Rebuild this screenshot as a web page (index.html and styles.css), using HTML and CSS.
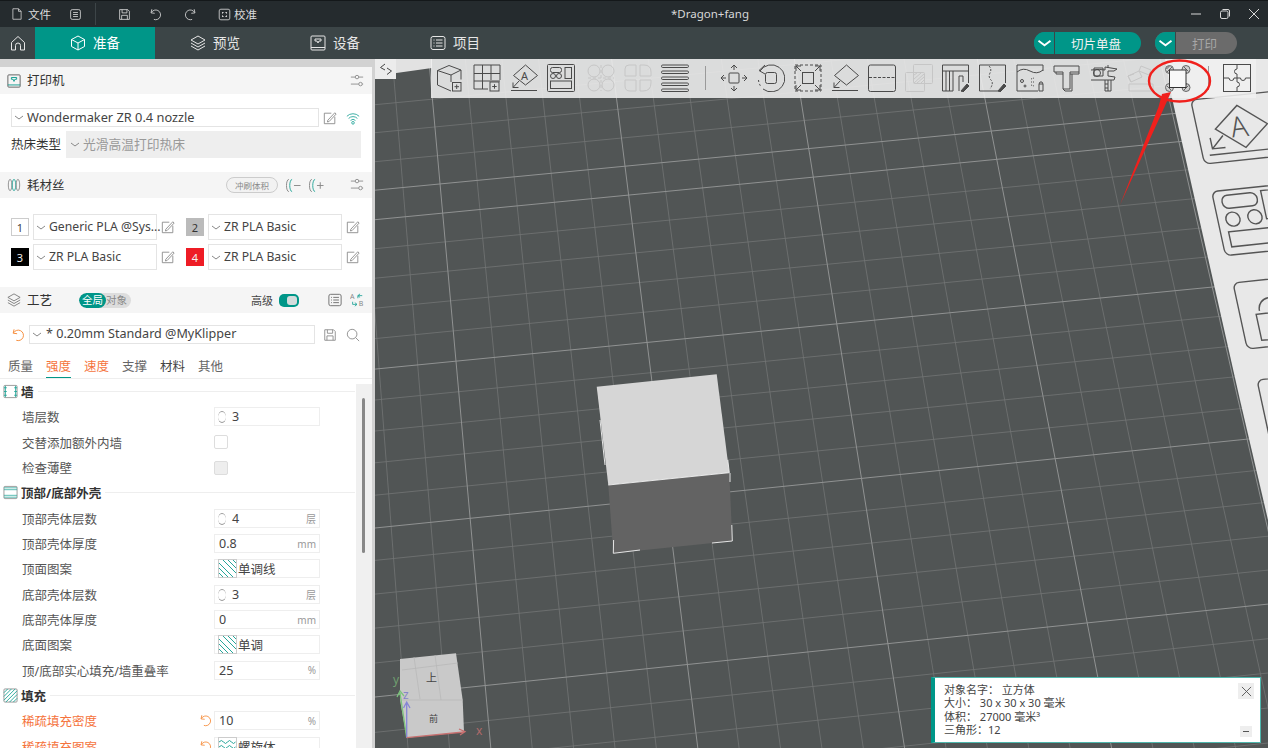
FILE: index.html
```html
<!DOCTYPE html>
<html lang="en">
<head>
    <meta charset="UTF-8">
    <meta name="viewport" content="width=device-width, initial-scale=1.0">
    <title>*Dragon+fang</title>
    <link rel="stylesheet" href="styles.css">
</head>
<body>
    <svg class="sprite" xmlns="http://www.w3.org/2000/svg">
        <symbol id="i-file" viewBox="0 0 16 16"><path d="M2.500 1h7.500l3.500 3.500V15h-11z M10 1v3.500h3.500"/></symbol>
        <symbol id="i-menu" viewBox="0 0 16 16"><rect x="2" y="2" width="12" height="12" rx="2"/><path d="M5 5.500h6M5 8h6M5 10.500h6"/></symbol>
        <symbol id="i-save" viewBox="0 0 16 16"><path d="M2 2h10l2 2v10H2z M5 2v4h6V2 M4.500 14v-5h7v5"/></symbol>
        <symbol id="i-undo" viewBox="0 0 16 16"><path d="M3.500 1.500L2.500 6L7 6.500 M3 5.500A6 6 0 1 1 6 14"/></symbol>
        <symbol id="i-redo" viewBox="0 0 16 16"><path d="M12.500 1.500L13.500 6L9 6.500 M13 5.500A6 6 0 1 0 10 14"/></symbol>
        <symbol id="i-calib" viewBox="0 0 16 16"><rect x="1.500" y="1.500" width="13" height="13" rx="2"/><path d="M5 5.500h2M9 5.500h2M5 10.500h2M9 10.500h2M5.500 5v2M10.500 5v2M5.500 9v2M10.500 9v2"/></symbol>
        <symbol id="i-home" viewBox="0 0 16 16"><path d="M1.500 7.500L8 1.500l6.500 6V15H10.500V10.500a2.500 2.500 0 0 0-5 0V15H1.500z"/></symbol>
        <symbol id="i-cube" viewBox="0 0 16 16"><path d="M8 1l6.500 3.500v7L8 15l-6.500-3.500v-7z M1.500 4.500L8 8l6.500-3.500 M8 8v7"/></symbol>
        <symbol id="i-layers" viewBox="0 0 16 16"><path d="M8 1l7 4-7 4-7-4z M1 8l7 4 7-4 M1 11l7 4 7-4"/></symbol>
        <symbol id="i-device" viewBox="0 0 16 16"><rect x="1" y="1" width="14" height="14" rx="1"/><path d="M1 12.500h14 M5 4h6v2H9L8 8 7 6H5z"/></symbol>
        <symbol id="i-list" viewBox="0 0 16 16"><rect x="1" y="1.500" width="14" height="13" rx="2"/><path d="M3.500 5h1M6 5h6.500M3.500 8h1M6 8h6.500M3.500 11h1M6 11h6.500"/></symbol>
        <symbol id="i-printer" viewBox="0 0 16 16"><rect x="1" y="1" width="14" height="14" rx="1" stroke="#555"/><path d="M1 12.500h14" stroke="#009688"/><path d="M5 4h6v2H9L8 8.500 7 6H5z" stroke="#009688"/></symbol>
        <symbol id="i-sliders" viewBox="0 0 16 16"><path d="M1 3.500h5M10 3.500h5M1 11.500h9M14 11.500h1"/><circle cx="8" cy="3.500" r="2"/><circle cx="12" cy="11.500" r="2"/></symbol>
        <symbol id="i-edit" viewBox="0 0 16 16"><path d="M13.500 6.500V14.500H1.500V2.500H9.500"/><path d="M5.500 10.500l8-8.500 1.500 1.500-8 8.500-2 .5z"/></symbol>
        <symbol id="i-wifi" viewBox="0 0 16 16"><path d="M1 6a10 10 0 0 1 14 0 M3 8.500a7 7 0 0 1 10 0 M5.200 10.800a4 4 0 0 1 5.600 0"/><circle cx="8" cy="13.500" r="1.500"/></symbol>
        <symbol id="i-spool" viewBox="0 0 16 16"><ellipse cx="3.500" cy="8" rx="2" ry="6.500" stroke="#888"/><ellipse cx="8" cy="8" rx="2" ry="6.500" stroke="#26a69a"/><ellipse cx="12.500" cy="8" rx="2" ry="6.500" stroke="#888"/></symbol>
        <symbol id="i-spool-minus" viewBox="0 0 16 16"><path d="M3 1.500a2.500 6.500 0 0 0 0 13" stroke="#888"/><path d="M6.500 1.500a2.500 6.500 0 0 0 0 13" stroke="#26a69a"/><path d="M8.500 8h7" stroke="#888"/></symbol>
        <symbol id="i-spool-plus" viewBox="0 0 16 16"><path d="M3 1.500a2.500 6.500 0 0 0 0 13" stroke="#888"/><path d="M6.500 1.500a2.500 6.500 0 0 0 0 13" stroke="#26a69a"/><path d="M8.500 8h7M12 4.500v7" stroke="#888"/></symbol>
        <symbol id="i-search" viewBox="0 0 16 16"><circle cx="7" cy="7" r="5.500"/><path d="M11 11l4 4"/></symbol>
        <symbol id="i-chev" viewBox="0 0 10 5"><path d="M1 1q4 3 4 3t4-3"/></symbol>
        <symbol id="i-swap" viewBox="0 0 16 16"><text x="0" y="7" class="swap-t">A</text><text x="10" y="15" class="swap-t">B</text><path d="M9 6V3h5M11.500 1l-2.500 2 2.500 2M3 10v3h5M5.500 11l2.500 2-2.500 2" stroke="#26a69a"/></symbol>
        <symbol id="i-wall" viewBox="0 0 16 16"><rect x="1" y="1.500" width="14" height="13" rx="1" stroke="#999"/><path d="M2.500 2v12M13.500 2v12M1 4h3M1 8h3M1 12h3M12 4h3M12 8h3M12 12h3" stroke="#26a69a"/></symbol>
        <symbol id="i-shell" viewBox="0 0 16 16"><rect x="1" y="1.500" width="14" height="13" rx="1" stroke="#999"/><path d="M1 3h14M1 5h14M1 11h14M1 13h14" stroke="#26a69a" stroke-width=".8"/></symbol>
        <symbol id="i-infill" viewBox="0 0 16 16"><rect x="1" y="1" width="14" height="14" rx="1" stroke="#999"/><path d="M1 5l4-4M1 9l8-8M1 13L13 1M3 15L15 3M7 15l8-8M11 15l4-4" stroke="#26a69a"/></symbol>
        <symbol id="i-hatch" viewBox="0 0 19 19"><rect x=".5" y=".5" width="18" height="18" stroke="#ccc"/><path d="M1 4l14 14M1 9l9 9M1 14l4 4M5 1l13 13M10 1l8 8M15 1l3 3" stroke="#26a69a"/></symbol>
        <symbol id="i-gyroid" viewBox="0 0 19 19"><rect x=".5" y=".5" width="18" height="18" stroke="#ccc"/><path d="M1 5q2.500-3 4.500 0t4 0 4 0 4 0M1 10q2.500-3 4.500 0t4 0 4 0 4 0M1 15q2.500-3 4.500 0t4 0 4 0 4 0" stroke="#26a69a"/></symbol>
        <symbol id="t-cube" viewBox="0 0 28 28"><path d="M1.500 6.500L13 1.500l12 4.500v9.500 M1.500 6.500L15 11l10-5 M1.500 6.500V21L15 27 M15 11v7"/><rect x="16.500" y="18.500" width="8.500" height="8.500"/><path d="M18.500 22.700h4.500M20.700 20.500v4.500"/></symbol>
        <symbol id="t-grid" viewBox="0 0 28 28"><path d="M15 25H1V1h26v15 M1 9.500h26M1 17h26M9.500 1v24M18 1v15"/><rect x="17" y="18" width="9" height="9"/><path d="M19.200 22.500h4.500M21.500 20.200v4.500"/></symbol>
        <symbol id="t-flat-a" viewBox="0 0 28 28"><path d="M15.500 1l12 10.500-12 9.500-12-9.500z M1 26.500h26 M9 17l-6 6.500 M3 18.500v5h5.500"/><text x="11" y="15.500" class="t-a">A</text></symbol>
        <symbol id="t-arrange" viewBox="0 0 28 28"><rect x=".5" y=".5" width="27" height="27" rx="1"/><rect x="3.500" y="3.500" width="11" height="5" rx="2"/><rect x="18" y="3.500" width="6.500" height="11"/><circle cx="6" cy="12" r="2.500"/><circle cx="12" cy="12" r="2.500"/><rect x="3.500" y="17" width="21" height="7.500"/></symbol>
        <symbol id="t-off-a" viewBox="0 0 28 28"><circle cx="7" cy="7" r="6"/><circle cx="21" cy="7" r="6"/><circle cx="7" cy="21" r="6"/><circle cx="21" cy="21" r="6"/><path d="M14 1v26M1 14h26" stroke-dasharray="3 2"/></symbol>
        <symbol id="t-off-b" viewBox="0 0 28 28"><path d="M12 12H1V5q0-4 4-4h7zM16 12h11V8q0-7-7-7h-4zM12 16H1v6q0 5 5 5h6zM16 16h11v3q0 8-8 8h-3z"/></symbol>
        <symbol id="t-layers" viewBox="0 0 28 28"><rect x=".5" y="1" width="27" height="2.500" rx="1.200"/><rect x=".5" y="7" width="27" height="2.500" rx="1.200"/><rect x=".5" y="13" width="27" height="2.500" rx="1.200"/><rect x=".5" y="19" width="27" height="2.500" rx="1.200"/><rect x=".5" y="25" width="27" height="2.500" rx="1.200"/></symbol>
        <symbol id="t-move" viewBox="0 0 28 28"><rect x="9" y="9" width="10" height="10" rx="1"/><path d="M14 1v5M11 4l3-3 3 3M14 22v5M11 24l3 3 3-3M1 14h5M4 11l-3 3 3 3M22 14h5M24 11l3 3-3 3"/></symbol>
        <symbol id="t-rotate" viewBox="0 0 28 28"><path d="M3 7A13.500 13.500 0 1 1 6 25"/><path d="M1.500 16a13 13 0 0 0 2 6" stroke-dasharray="2 2"/><path d="M8 1L2 6.500 8 10"/><rect x="8.500" y="8.500" width="11" height="11" rx="2"/></symbol>
        <symbol id="t-scale" viewBox="0 0 28 28"><rect x="1" y="1" width="26" height="26" stroke-dasharray="3 2"/><rect x="8.500" y="8.500" width="11" height="11"/><path d="M2 2l5 5M2 7V2h5M26 2l-5 5M21 2h5v5M2 26l5-5M2 21v5h5M26 26l-5-5M21 26h5v-5"/></symbol>
        <symbol id="t-flat" viewBox="0 0 28 28"><path d="M15.500 1l12 10.500-12 9.500-12-9.500z M1 26.500h26 M9 17l-6 6.500 M3 18.500v5h5.500"/></symbol>
        <symbol id="t-cut" viewBox="0 0 28 28"><rect x=".5" y="1" width="27" height="26.500" rx="2"/><path d="M1 13.500h26" stroke-dasharray="3 1.500"/></symbol>
        <symbol id="t-trans" viewBox="0 0 28 28"><rect x="8.500" y=".5" width="19" height="19" rx="1"/><rect x=".5" y="8.500" width="19" height="19" rx="1"/><path d="M9 11l3-2M9 15l7-6M9 19l10-9M12 19l7-6M16 19l3-3"/></symbol>
        <symbol id="t-wall" viewBox="0 0 28 28"><path d="M.5 27V1h26v18 M.5 7h26 M4 7v20M7.500 7v20M11 7v20M.5 27H11 M17 27V12h4v6"/><path d="M19 27l6-7 2 2-6 6z" class="t-solid"/></symbol>
        <symbol id="t-seam" viewBox="0 0 28 28"><path d="M19 27H.5V1h26v18"/><path d="M10 2q3 3 1 7t1 7-1 9" stroke-dasharray="2 1.500"/><path d="M19 27l6-7 2 2-6 6z" class="t-solid"/></symbol>
        <symbol id="t-paint" viewBox="0 0 28 28"><path d="M22 27H1V1h26v6 M1 8q6-5 13-1t13-1 M23 27v-7h4v7z M23 20l1-2h2l1 2"/><circle cx="6" cy="17" r="1.500"/><circle cx="9" cy="22" r="1"/><path d="M15 15l3-1M15 18h3M15 21l3 1" stroke-dasharray="1 1"/></symbol>
        <symbol id="t-text" viewBox="0 0 28 28"><path d="M1 2h25v6h-9v17h-7V8H1z M3 8v2h7 M17 10h9V8 M10 25l2 2h7V10"/></symbol>
        <symbol id="t-caliper" viewBox="0 0 28 28"><path d="M1 6q10-1 14 0V3l12 2-3 2H18v5l7 1-1 3H1 M4 4h9v8H4z M15 16v11h6V16 M18 16v11 M15 20h3M15 24h3M18 1v3"/><circle cx="7" cy="9" r="3.500"/></symbol>
        <symbol id="t-assembly" viewBox="0 0 28 28"><path d="M1 12L12 7l3 6-11 5z M14 2l10 4-2 5-10-4z M2 20h24v7H2z M4 18l-3-6 6-2"/></symbol>
        <symbol id="t-fixture" viewBox="0 0 28 28"><g class="t-hatch"><circle cx="5.500" cy="5.500" r="4"/><circle cx="22" cy="5.500" r="4"/><circle cx="5.500" cy="23.500" r="4"/><circle cx="22" cy="23.500" r="4"/><path d="M2.500 5l3-3M3 8l5-5M20 3l4.500 4.500M19.500 6l3 3M3 22l4 4M5 20l3 3M20 26l4.500-4.500M19.500 23l3-3"/></g><rect x="5.500" y="6" width="16.500" height="17.500" class="t-box"/></symbol>
        <symbol id="t-puzzle" viewBox="0 0 28 28"><rect x=".5" y=".5" width="27" height="27"/><path d="M14 .5V5a2.500 2.500 0 1 0 0 5v4h3.500a2.500 2.500 0 1 0 5 0h5 M14 14v4a2.500 2.500 0 1 1 0 5v4.500 M14 14h-3a2.500 2.500 0 1 1-5 0H.5"/></symbol>
    </svg>

    <header class="titlebar">
        <div class="tbar-group">
            <span class="tbar-btn first"><svg class="ic ic12"><use href="#i-file"/></svg>文件</span>
            <span class="tbar-btn menu"><svg class="ic ic13"><use href="#i-menu"/></svg></span>
            <span class="tbar-sep"></span>
            <span class="tbar-btn save"><svg class="ic ic13"><use href="#i-save"/></svg></span>
            <span class="tbar-btn undo"><svg class="ic ic13"><use href="#i-undo"/></svg></span>
            <span class="tbar-btn redo"><svg class="ic ic13"><use href="#i-redo"/></svg></span>
            <span class="tbar-btn calib"><svg class="ic ic13"><use href="#i-calib"/></svg>校准</span>
        </div>
        <div class="doc-title">*Dragon+fang</div>
        <div class="win-controls">
            <svg class="win-ic" viewBox="0 0 10 10"><path d="M0 5h10"/></svg>
            <svg class="win-ic" viewBox="0 0 10 10"><rect x=".5" y="2" width="7.500" height="7.500" rx="1.500"/><path d="M2.500 .5h5.500q1.500 0 1.500 1.500v5.500"/></svg>
            <svg class="win-ic" viewBox="0 0 10 10"><path d="M0 0l10 10M10 0L0 10"/></svg>
        </div>
    </header>

    <nav class="navbar">
        <span class="nav-home"><svg class="ic ic16"><use href="#i-home"/></svg></span>
        <a class="nav-tab active"><svg class="ic ic16"><use href="#i-cube"/></svg>准备</a>
        <a class="nav-tab"><svg class="ic ic16"><use href="#i-layers"/></svg>预览</a>
        <a class="nav-tab"><svg class="ic ic16"><use href="#i-device"/></svg>设备</a>
        <a class="nav-tab"><svg class="ic ic16"><use href="#i-list"/></svg>项目</a>
        <div class="nav-actions">
            <div class="split-btn">
                <span class="split-chev"><svg class="chev-w"><use href="#i-chev"/></svg></span>
                <span class="split-label">切片单盘</span>
            </div>
            <div class="split-btn off">
                <span class="split-chev"><svg class="chev-w"><use href="#i-chev"/></svg></span>
                <span class="split-label">打印</span>
            </div>
        </div>
    </nav>

    <main class="main">
        <aside class="sidebar">
            <div class="side-cap"></div>

            <div class="sec-head">
                <svg class="ic ic14"><use href="#i-printer"/></svg>
                <span class="sec-title">打印机</span>
                <svg class="ic ic14 push muted"><use href="#i-sliders"/></svg>
            </div>
            <div class="printer-body">
                <div class="printer-row">
                    <div class="select printer-select"><svg class="chev"><use href="#i-chev"/></svg>Wondermaker ZR 0.4 nozzle</div>
                    <svg class="ic ic14 muted"><use href="#i-edit"/></svg>
                    <svg class="ic ic14 teal wifi"><use href="#i-wifi"/></svg>
                </div>
                <div class="bed-row">
                    <span class="bed-label">热床类型</span>
                    <div class="select bed-select"><svg class="chev"><use href="#i-chev"/></svg>光滑高温打印热床</div>
                </div>
            </div>

            <div class="sec-head short">
                <svg class="ic ic14"><use href="#i-spool"/></svg>
                <span class="sec-title">耗材丝</span>
                <span class="flush-pill">冲刷体积</span>
                <svg class="ic ic15 spool-btn"><use href="#i-spool-minus"/></svg>
                <svg class="ic ic15 spool-btn"><use href="#i-spool-plus"/></svg>
                <svg class="ic ic14 muted sliders"><use href="#i-sliders"/></svg>
            </div>
            <div class="filaments">
                <div class="fil">
                    <span class="swatch sw-white">1</span>
                    <div class="select fil-select narrow"><svg class="chev"><use href="#i-chev"/></svg>Generic PLA @Sys...</div>
                    <svg class="ic ic14 muted"><use href="#i-edit"/></svg>
                </div>
                <div class="fil">
                    <span class="swatch sw-gray">2</span>
                    <div class="select fil-select wide"><svg class="chev"><use href="#i-chev"/></svg>ZR PLA Basic</div>
                    <svg class="ic ic14 muted"><use href="#i-edit"/></svg>
                </div>
                <div class="fil">
                    <span class="swatch sw-black">3</span>
                    <div class="select fil-select narrow"><svg class="chev"><use href="#i-chev"/></svg>ZR PLA Basic</div>
                    <svg class="ic ic14 muted"><use href="#i-edit"/></svg>
                </div>
                <div class="fil">
                    <span class="swatch sw-red">4</span>
                    <div class="select fil-select wide"><svg class="chev"><use href="#i-chev"/></svg>ZR PLA Basic</div>
                    <svg class="ic ic14 muted"><use href="#i-edit"/></svg>
                </div>
            </div>

            <div class="sec-head short">
                <svg class="ic ic14 layers-ic"><use href="#i-layers"/></svg>
                <span class="sec-title">工艺</span>
                <div class="scope"><span class="scope-on">全局</span><span class="scope-off">对象</span></div>
                <span class="adv-label">高级</span>
                <span class="adv-toggle"><i></i></span>
                <svg class="ic ic14 list-ic"><use href="#i-list"/></svg>
                <svg class="ic ic14 swap-ic"><use href="#i-swap"/></svg>
            </div>
            <div class="preset-row">
                <svg class="ic ic14 orange"><use href="#i-undo"/></svg>
                <div class="select preset-select"><svg class="chev"><use href="#i-chev"/></svg>* 0.20mm Standard @MyKlipper</div>
                <svg class="ic ic14 muted"><use href="#i-save"/></svg>
                <svg class="ic ic14 muted"><use href="#i-search"/></svg>
            </div>
            <div class="tabs">
                <span class="tab">质量</span>
                <span class="tab mod current">强度</span>
                <span class="tab mod">速度</span>
                <span class="tab">支撑</span>
                <span class="tab dark">材料</span>
                <span class="tab">其他</span>
            </div>

            <div class="params">
                <div class="param-list">
                    <div class="group"><svg class="ic ic15"><use href="#i-wall"/></svg><b>墙</b><i></i></div>
                    <div class="row"><label>墙层数</label><span class="slot"></span><span class="field"><span class="spin"></span>3</span></div>
                    <div class="row"><label>交替添加额外内墙</label><span class="slot"></span><span class="check"></span></div>
                    <div class="row"><label>检查薄壁</label><span class="slot"></span><span class="check off"></span></div>
                    <div class="group"><svg class="ic ic15"><use href="#i-shell"/></svg><b>顶部/底部外壳</b><i></i></div>
                    <div class="row"><label>顶部壳体层数</label><span class="slot"></span><span class="field"><span class="spin"></span>4<em>层</em></span></div>
                    <div class="row"><label>顶部壳体厚度</label><span class="slot"></span><span class="field plain">0.8<em>mm</em></span></div>
                    <div class="row"><label>顶面图案</label><span class="slot"></span><span class="field pattern"><svg class="ic pat"><use href="#i-hatch"/></svg>单调线</span></div>
                    <div class="row"><label>底部壳体层数</label><span class="slot"></span><span class="field"><span class="spin"></span>3<em>层</em></span></div>
                    <div class="row"><label>底部壳体厚度</label><span class="slot"></span><span class="field plain">0<em>mm</em></span></div>
                    <div class="row"><label>底面图案</label><span class="slot"></span><span class="field pattern"><svg class="ic pat"><use href="#i-hatch"/></svg>单调</span></div>
                    <div class="row"><label>顶/底部实心填充/墙重叠率</label><span class="slot"></span><span class="field plain">25<em>%</em></span></div>
                    <div class="group"><svg class="ic ic15"><use href="#i-infill"/></svg><b>填充</b><i></i></div>
                    <div class="row mod"><label>稀疏填充密度</label><span class="slot"><svg class="ic ic13 orange"><use href="#i-undo"/></svg></span><span class="field plain">10<em>%</em></span></div>
                    <div class="row mod"><label>稀疏填充图案</label><span class="slot"><svg class="ic ic13 orange"><use href="#i-undo"/></svg></span><span class="field pattern"><svg class="ic pat"><use href="#i-gyroid"/></svg>螺旋体</span></div>
                </div>
                <div class="scroll-track"><span class="scroll-thumb"></span></div>
            </div>
        </aside>

        <section class="viewport">
            <svg class="scene" viewBox="375 59 893 689" xmlns="http://www.w3.org/2000/svg">
                <g class="grid">
                    <path d="M375 104.700L1268 19M375 132.700L1268 47M375 161.700L1268 76M375 248.700L1268 162M375 278.200L1268 191.500M375 308.200L1268 221.500M375 338.600L1268 251M375 400L1268 311.600M375 431L1268 342.600M375 462.800L1268 373.500M375 495.200L1268 405.900M375 560.400L1268 469.300M375 594.100L1268 502.200M375 628.100L1268 536.200M375 663L1268 570.100M375 732.400L1268 638.700M375 766.700L1268 673M375 801.700L1268 708M375 836.700L1268 743"/>
                    <path d="M355.600 59L408 748M392.300 59L449.500 748M465.300 59L532.200 748M501.900 59L573.600 748M538.500 59L615 748M575 59L656.300 748M648.200 59L739.100 748M684.700 59L780.500 748M721.300 59L821.900 748M757.800 59L863.300 748M830.900 59L946 748M867.500 59L987.400 748M904 59L1028.800 748M940.600 59L1070.100 748M1013.700 59L1152.900 748M1050.200 59L1194.300 748M1086.800 59L1235.600 748M1123.400 59L1277 748M1196.500 59L1359.800 748M1233 59L1401 748"/>
                </g>
                <g class="grid bright">
                    <path d="M375 190.200L1268 104.500M375 219.700L1268 133M375 369.100L1268 281.600M375 528L1268 437M375 697L1268 604.100"/>
                    <path d="M428.800 59L490.800 748M611.600 59L697.800 748M794.400 59L904.600 748M977.200 59L1111.600 748M1159.900 59L1318 748"/>
                </g>

                <path class="corner-light" d="M375 59H432V68L375 76z"/>

                <!-- enlarged toolbar icons that hang off the right edge -->
                <path class="side-sheet" d="M1165 59H1268V520L1240 400 1172 98z"/>
                <g class="sheet-icons" transform="matrix(1 -.105 .216 1 1190.700 100)">
                    <rect width="90" height="64" rx="6"/>
                    <path d="M44 10L70 31 44 52 18 31z M7 56H70 M24 38L11 50 M11 39V50H24"/>
                    <text x="33" y="41" class="sheet-a">A</text>
                </g>
                <g class="sheet-icons" transform="matrix(1 -.105 .216 1 1211.700 191.700)">
                    <rect width="90" height="64" rx="6"/>
                    <rect x="8" y="5" width="35" height="13" rx="6"/>
                    <rect x="48" y="4" width="30" height="28"/>
                    <circle cx="15" cy="29" r="7"/>
                    <circle cx="37" cy="29" r="7"/>
                    <rect x="8" y="41" width="50" height="15"/>
                </g>
                <g class="sheet-icons" transform="matrix(1 -.105 .216 1 1233 283)">
                    <rect width="90" height="66" rx="6"/>
                    <path d="M20 30a12 12 0 0 1 24 0"/>
                    <rect x="16" y="33" width="30" height="26"/>
                </g>
                <g class="sheet-icons" transform="matrix(1 -.105 .216 1 1257 380)">
                    <rect width="90" height="66" rx="6"/>
                </g>

                <!-- object on the plate -->
                <path class="cube-top" d="M596.700 386.700L716.700 374.300 729.300 472.700 608.300 485z"/>
                <path class="cube-front" d="M608.300 485L729.300 472.700 732.300 541 613.300 553.300z"/>
                <path class="cube-edge" d="M608.300 485L729.300 472.700M600 420L605 465M613.600 540L613.300 553.300 640 550M727.800 460L729.300 472.700M730 473V482M731.800 525L732.300 541 712 543"/>

                <!-- orientation cube -->
                <path class="nav-cube" d="M400 659L456 653.300 462.700 700 464 732 406.700 737.700 400 700z"/>
                <path class="nav-cube-lines" d="M400 700L462.700 700M402 670L458 663M435 655L441 700M414 657L420 699"/>
                <text x="426" y="682" class="nav-cube-t">上</text>
                <text x="429" y="722" class="nav-cube-t small">前</text>
                <path class="axis-y" d="M406.700 737.700L400 693M397 697L400 691 404 696"/>
                <path class="axis-z" d="M406.700 737.700V703M403.500 708L406.700 702 410 708"/>
                <path class="axis-x" d="M406.700 737.700L464 732M459 729L465 731.700 460 735"/>
                <text x="393" y="684" class="axis-t y">y</text>
                <text x="403" y="699" class="axis-t z">z</text>
                <text x="476" y="735" class="axis-t x">x</text>
            </svg>

            <button class="collapse" type="button" aria-label="collapse"><svg class="collapse-ic" viewBox="0 0 14 14"><path d="M6 2L1.500 5.500 6 8M8 6l4.500 3L8 12.500"/></svg></button>

            <div class="toolbar">
                <svg class="tb"><use href="#t-cube"/></svg>
                <svg class="tb"><use href="#t-grid"/></svg>
                <svg class="tb"><use href="#t-flat-a"/></svg>
                <svg class="tb"><use href="#t-arrange"/></svg>
                <svg class="tb off first-off"><use href="#t-off-a"/></svg>
                <svg class="tb off"><use href="#t-off-b"/></svg>
                <svg class="tb"><use href="#t-layers"/></svg>
                <span class="tb-sep"></span>
                <svg class="tb"><use href="#t-move"/></svg>
                <svg class="tb"><use href="#t-rotate"/></svg>
                <svg class="tb"><use href="#t-scale"/></svg>
                <svg class="tb"><use href="#t-flat"/></svg>
                <svg class="tb"><use href="#t-cut"/></svg>
                <svg class="tb off"><use href="#t-trans"/></svg>
                <svg class="tb"><use href="#t-wall"/></svg>
                <svg class="tb"><use href="#t-seam"/></svg>
                <svg class="tb"><use href="#t-paint"/></svg>
                <svg class="tb"><use href="#t-text"/></svg>
                <svg class="tb"><use href="#t-caliper"/></svg>
                <svg class="tb off"><use href="#t-assembly"/></svg>
                <svg class="tb"><use href="#t-fixture"/></svg>
                <span class="tb-sep"></span>
                <svg class="tb"><use href="#t-puzzle"/></svg>
            </div>

            <!-- red mark drawn on top of the screenshot -->
            <svg class="annot" viewBox="375 59 893 689" xmlns="http://www.w3.org/2000/svg">
                <ellipse class="note-ring" cx="1179.500" cy="81" rx="30.500" ry="20.500"/>
                <path class="note-arrow" d="M1171 92L1164 108 1120 205 1158.500 107 1162 94z"/>
            </svg>

            <div class="info-box">
                <p>对象名字：&nbsp;立方体</p>
                <p>大小：&nbsp;30 x 30 x 30 毫米</p>
                <p>体积：&nbsp;27000 毫米³</p>
                <p>三角形：12</p>
                <span class="info-close"><svg class="info-x" viewBox="0 0 12 12"><path d="M1 1l10 10M11 1L1 11"/></svg></span>
                <span class="info-min"></span>
            </div>
        </section>
    </main>
</body>
</html>
```

FILE: styles.css
```css
* {
    box-sizing: border-box;
}

html, body {
    margin: 0;
    padding: 0;
}

body {
    width: 1268px;
    height: 748px;
    overflow: hidden;
    display: flex;
    flex-direction: column;
    font-family: "Noto Sans", "Noto Sans CJK SC", sans-serif;
    font-size: 12.5px;
    color: #444;
    background-color: #515555;
}

.sprite {
    display: none;
}

.ic {
    flex: none;
    fill: none;
    stroke: currentColor;
    stroke-width: 1;
}

.ic12 { width: 12px; height: 12px; }
.ic13 { width: 13px; height: 13px; }
.ic14 { width: 14px; height: 14px; }
.ic15 { width: 15px; height: 15px; }
.ic16 { width: 16px; height: 16px; }

.muted { color: #888; }
.teal { color: #26a69a; }
.orange { color: #f5822a; }

/* title bar */
.titlebar {
    position: relative;
    height: 27px;
    flex: none;
    display: flex;
    align-items: center;
    background-color: #252b2e;
    border-top: 1px solid #14181a;
    color: #dcdcdc;
    font-size: 11.5px;
}

.tbar-group {
    display: flex;
    align-items: center;
    height: 100%;
}

.tbar-btn {
    display: flex;
    align-items: center;
    gap: 5px;
}

.tbar-btn.first { margin-left: 11px; }
.tbar-btn.menu { margin-left: 18px; }
.tbar-btn.save { margin-left: 22px; }
.tbar-btn.undo { margin-left: 18px; }
.tbar-btn.redo { margin-left: 22px; }
.tbar-btn.calib { margin-left: 21px; gap: 3px; }

.tbar-sep {
    width: 1px;
    height: 22px;
    margin-left: 13px;
    background-color: #3d4548;
}

.doc-title {
    position: absolute;
    left: 671px;
    top: 5px;
    font-size: 11.5px;
    color: #d8d8d8;
}

.win-controls {
    margin-left: auto;
    margin-right: 9px;
    display: flex;
    gap: 19px;
}

.win-ic {
    width: 10px;
    height: 10px;
    fill: none;
    stroke: #d8d8d8;
    stroke-width: 1;
}

/* main nav */
.navbar {
    height: 32px;
    flex: none;
    display: flex;
    align-items: stretch;
    background-color: #3c4547;
    color: #e6e6e6;
    font-size: 13.5px;
}

.nav-home {
    width: 35px;
    display: flex;
    align-items: center;
    justify-content: center;
}

.nav-tab {
    width: 120px;
    display: flex;
    align-items: center;
    justify-content: center;
    gap: 7px;
    padding-bottom: 2px;
}

.nav-tab .ic {
    margin-top: 2px;
}

.nav-tab.active {
    background-color: #009688;
    color: #fff;
}

.nav-actions {
    margin-left: auto;
    margin-right: 31px;
    display: flex;
    align-items: center;
    gap: 14px;
}

.split-btn {
    display: flex;
    height: 22px;
    width: 107px;
    border-radius: 11px;
    overflow: hidden;
    background-color: #009688;
    color: #f2f2f2;
    font-size: 12.5px;
}

.split-btn.off {
    width: 82px;
    background-color: #6b6b6b;
    color: #a6a6a6;
}

.split-chev {
    width: 21px;
    flex: none;
    display: flex;
    align-items: center;
    justify-content: center;
    background-color: #009688;
    border-right: 1px solid #3c4547;
}

.chev-w {
    width: 15px;
    height: 8px;
    fill: none;
    stroke: #fff;
    stroke-width: 1.2;
}

.split-label {
    flex: 1;
    display: flex;
    align-items: center;
    justify-content: center;
    padding-right: 4px;
}

/* layout below the nav */
.main {
    flex: 1;
    display: flex;
    min-height: 0;
}

.sidebar {
    width: 375px;
    flex: none;
    display: flex;
    flex-direction: column;
    background-color: #fff;
    border-right: 3px solid #d2d2d2;
    overflow: hidden;
}

.side-cap {
    height: 8px;
    flex: none;
    background-color: #d2d2d2;
}

.sec-head {
    height: 27px;
    flex: none;
    display: flex;
    align-items: center;
    padding: 0 8px 0 7px;
    background-color: #f5f5f5;
}

.sec-head.short {
    height: 26px;
}

.sec-title {
    margin-left: 6px;
    margin-top: -2px;
    font-size: 12.5px;
    color: #333;
}

.push {
    margin-left: auto;
}

/* dropdowns */
.select {
    display: flex;
    align-items: center;
    padding-bottom: 2px;
    background-color: #fff;
    border: 1px solid #e4e4e4;
    color: #444;
    font-size: 12.2px;
    white-space: nowrap;
}

.chev {
    width: 10px;
    height: 5px;
    flex: none;
    margin: 2px 3px 0 2px;
    fill: none;
    stroke: #888;
    stroke-width: 1;
}

.printer-body {
    height: 78px;
    flex: none;
    padding: 14px 11px 0 11px;
}

.printer-row {
    display: flex;
    align-items: center;
    height: 19px;
}

.printer-select {
    width: 308px;
    height: 19px;
    margin-right: 4px;
    font-size: 12.8px;
}

.wifi {
    margin-left: 9px;
}

.bed-row {
    display: flex;
    align-items: center;
    height: 27px;
    margin-top: 4px;
}

.bed-label {
    width: 55px;
    flex: none;
    margin-top: -2px;
    color: #333;
    font-size: 12.5px;
}

.bed-select {
    width: 295px;
    height: 27px;
    background-color: #eee;
    border-color: #eee;
    color: #999;
    font-size: 12.75px;
}

.bed-select .chev {
    margin-left: 3px;
    margin-right: 3px;
}

.flush-pill {
    margin-left: auto;
    width: 52px;
    height: 16px;
    display: flex;
    align-items: center;
    justify-content: center;
    border: 1px solid #ccc;
    border-radius: 8px;
    background-color: #f2f2f2;
    color: #888;
    font-size: 8.5px;
}

.spool-btn {
    margin-left: 8px;
}

.sliders {
    margin-left: 26px;
}

/* filament grid */
.filaments {
    height: 89px;
    flex: none;
    padding: 16px 12px 0 11px;
    display: grid;
    grid-template-columns: 175px 174px;
    grid-auto-rows: 26px;
    row-gap: 4px;
}

.fil {
    display: flex;
    align-items: center;
}

.swatch {
    width: 18px;
    height: 18px;
    flex: none;
    margin-right: 4px;
    display: flex;
    align-items: center;
    justify-content: center;
    font-size: 11px;
}

.sw-white { background-color: #fff; border: 1px solid #ccc; color: #444; }
.sw-gray { background-color: #bbb; color: #333; }
.sw-black { background-color: #000; color: #eee; }
.sw-red { background-color: #ee1c25; color: #f2f2f2; }

.fil-select {
    height: 26px;
    margin-right: 4px;
}

.fil-select.narrow { width: 124px; }
.fil-select.wide { width: 135px; }

/* process header */
.layers-ic {
    color: #777;
}

.scope {
    margin-left: 27px;
    display: flex;
    width: 52px;
    height: 15px;
    border-radius: 8px;
    background-color: #ddd;
    font-size: 10.5px;
    line-height: 15px;
    overflow: hidden;
}

.scope-on {
    width: 27px;
    text-align: center;
    border-radius: 8px;
    background-color: #009688;
    color: #fff;
}

.scope-off {
    color: #888;
}

.adv-label {
    margin-left: 120px;
    font-size: 11px;
    color: #444;
}

.adv-toggle {
    margin-left: 6px;
    width: 20px;
    height: 13px;
    padding: 2px;
    display: flex;
    justify-content: flex-end;
    border-radius: 5px;
    background-color: #009688;
}

.adv-toggle i {
    width: 10px;
    height: 9px;
    border-radius: 3px;
    background-color: #d4dcdc;
}

.list-ic {
    margin-left: 29px;
    color: #666;
}

.swap-ic {
    margin-left: 8px;
    color: #888;
}

.swap-t {
    font-size: 8px;
    fill: #888;
    stroke: none;
}

/* preset */
.preset-row {
    height: 44px;
    flex: none;
    padding: 12px 12px 0 11px;
    display: flex;
    align-items: flex-start;
}

.preset-row .ic {
    margin-top: 3px;
}

.preset-select {
    width: 286px;
    height: 19px;
    margin: 0 8px 0 4px;
    font-size: 12.6px;
}

.preset-select .chev {
    margin-right: 4px;
}

.preset-row .ic:last-child {
    margin-left: 9px;
}

.tabs {
    height: 22px;
    flex: none;
    padding: 0 0 0 8px;
    display: flex;
    gap: 13px;
    border-bottom: 1px solid #eee;
    font-size: 12.5px;
    line-height: 20px;
    color: #666;
}

.tab.dark { color: #444; }
.tab.mod { color: #f5733c; }

.tab.current {
    box-shadow: 0 1px 0 #009688;
    height: 20px;
}

/* parameter list */
.params {
    flex: 1;
    min-height: 0;
    display: flex;
    overflow: hidden;
}

.param-list {
    flex: 1;
}

.group, .row {
    height: 25.33px;
    display: flex;
    align-items: center;
}

.group {
    padding: 0 1px 0 3px;
    color: #333;
}

.group b {
    margin-left: 3px;
    font-size: 12.5px;
    font-weight: 700;
    white-space: nowrap;
}

.group i {
    flex: 1;
    height: 1px;
    margin-left: 4px;
    background-color: #eee;
}

.row {
    padding-left: 22px;
    color: #555;
}

.row label {
    width: 177px;
    flex: none;
    font-size: 12.5px;
    white-space: nowrap;
}

.row.mod label {
    color: #f5733c;
}

.slot {
    width: 15px;
    flex: none;
    display: flex;
    align-items: center;
}

.field {
    position: relative;
    width: 106px;
    height: 19px;
    display: flex;
    align-items: center;
    padding-left: 17px;
    border: 1px solid #eee;
    font-size: 12.5px;
    color: #444;
}

.field.plain {
    padding-left: 4px;
}

.field.pattern {
    padding-left: 3px;
}

.pat {
    width: 19px;
    height: 19px;
    margin-right: 1px;
}

.field em {
    margin-left: auto;
    margin-right: 3px;
    font-size: 10px;
    font-style: normal;
    color: #999;
}

.spin {
    position: absolute;
    left: 3px;
    top: 3px;
    width: 8px;
    height: 12px;
    border-top: 1px solid #999;
    border-bottom: 1px solid #999;
    border-radius: 50%;
}

.check {
    width: 14px;
    height: 14px;
    border: 1px solid #ddd;
    border-radius: 2px;
    background-color: #fff;
}

.check.off {
    background-color: #eee;
}

.scroll-track {
    width: 16px;
    flex: none;
    margin-top: 5px;
    background-color: #f0f0f0;
    position: relative;
}

.scroll-thumb {
    position: absolute;
    left: 6px;
    top: 14px;
    width: 3px;
    height: 155px;
    border-radius: 2px;
    background-color: #888;
}

/* 3d view */
.viewport {
    position: relative;
    flex: 1;
    overflow: hidden;
}

.scene, .annot {
    position: absolute;
    left: 0;
    top: 0;
    width: 893px;
    height: 689px;
}

.annot {
    pointer-events: none;
}

.grid {
    fill: none;
    stroke: #727575;
    stroke-width: .8;
}

.grid.bright {
    stroke: #909292;
    stroke-width: 1;
}

.corner-light { fill: #e2e2e2; }
.side-sheet { fill: #e8e8e8; }

.sheet-icons {
    fill: none;
    stroke: #555;
    stroke-width: 1.4;
}

.sheet-a {
    fill: #555;
    stroke: none;
    font-size: 28px;
    font-weight: 300;
}

.cube-top { fill: #d6d6d6; }
.cube-front { fill: #636363; }

.cube-edge {
    fill: none;
    stroke: #f4f4f4;
    stroke-width: .9;
}

.nav-cube { fill: #c9c9c9; }

.nav-cube-lines {
    fill: none;
    stroke: #b6b6b6;
    stroke-width: .7;
}

.nav-cube-t {
    font-size: 11px;
    fill: #444;
}

.nav-cube-t.small { font-size: 9px; }

.axis-y, .axis-z, .axis-x {
    fill: none;
    stroke-width: 1.3;
}

.axis-y { stroke: #7cc47c; }
.axis-z { stroke: #8585d6; }
.axis-x { stroke: #c87070; }

.axis-t {
    font-size: 12px;
}

.axis-t.y { fill: #6f9f6f; }
.axis-t.z { fill: #8585c8; }
.axis-t.x { fill: #b06a6a; }

.note-ring {
    fill: none;
    stroke: #f0201c;
    stroke-width: 2.4;
}

.note-arrow {
    fill: #f0201c;
}

.collapse {
    position: absolute;
    left: 0;
    top: 0;
    width: 21px;
    height: 20px;
    padding: 0;
    border: none;
    background-color: #ececec;
    display: flex;
    align-items: center;
    justify-content: center;
}

.collapse-ic {
    width: 14px;
    height: 14px;
    fill: none;
    stroke: #444;
    stroke-width: 1;
}

.toolbar {
    position: absolute;
    left: 56px;
    top: 0;
    width: 825px;
    height: 39px;
    padding: 5px 0 0 5px;
    display: flex;
    gap: 9px;
    background-color: rgba(240, 240, 240, .87);
}

.tb {
    width: 28px;
    height: 28px;
    flex: none;
    fill: none;
    stroke: #4a4a4a;
    stroke-width: 1;
}

.tb.off {
    stroke: #c6c6c6;
}

.tb.first-off {
    margin-left: 3px;
}

.tb-sep {
    width: 1px;
    height: 24px;
    flex: none;
    margin: 2px 5px 0 7px;
    background-color: #9a9a9a;
}

.t-a {
    font-size: 11px;
    fill: #4a4a4a;
    stroke: none;
}

.t-solid {
    fill: #4a4a4a;
}

.t-hatch {
    fill: #d0d0d0;
    stroke: #666;
}

.t-box {
    fill: #f8f8f8;
    stroke: #333;
}

/* object info */
.info-box {
    position: absolute;
    left: 556px;
    top: 618px;
    width: 330px;
    height: 66px;
    padding: 5px 0 0 9px;
    background-color: #fff;
    border: 1px solid #4db6ac;
    border-left: 4px solid #009688;
    font-size: 11px;
    line-height: 13.3px;
    color: #444;
}

.info-box p {
    margin: 0;
}

.info-close {
    position: absolute;
    right: 6px;
    top: 5px;
    width: 16px;
    height: 16px;
    display: flex;
    align-items: center;
    justify-content: center;
    background-color: #eee;
}

.info-x {
    width: 11px;
    height: 11px;
    fill: none;
    stroke: #555;
    stroke-width: 1;
}

.info-min {
    position: absolute;
    right: 8px;
    top: 48px;
    width: 12px;
    height: 11px;
    background: linear-gradient(#555, #555) center / 6px 1px no-repeat #eee;
}
```
